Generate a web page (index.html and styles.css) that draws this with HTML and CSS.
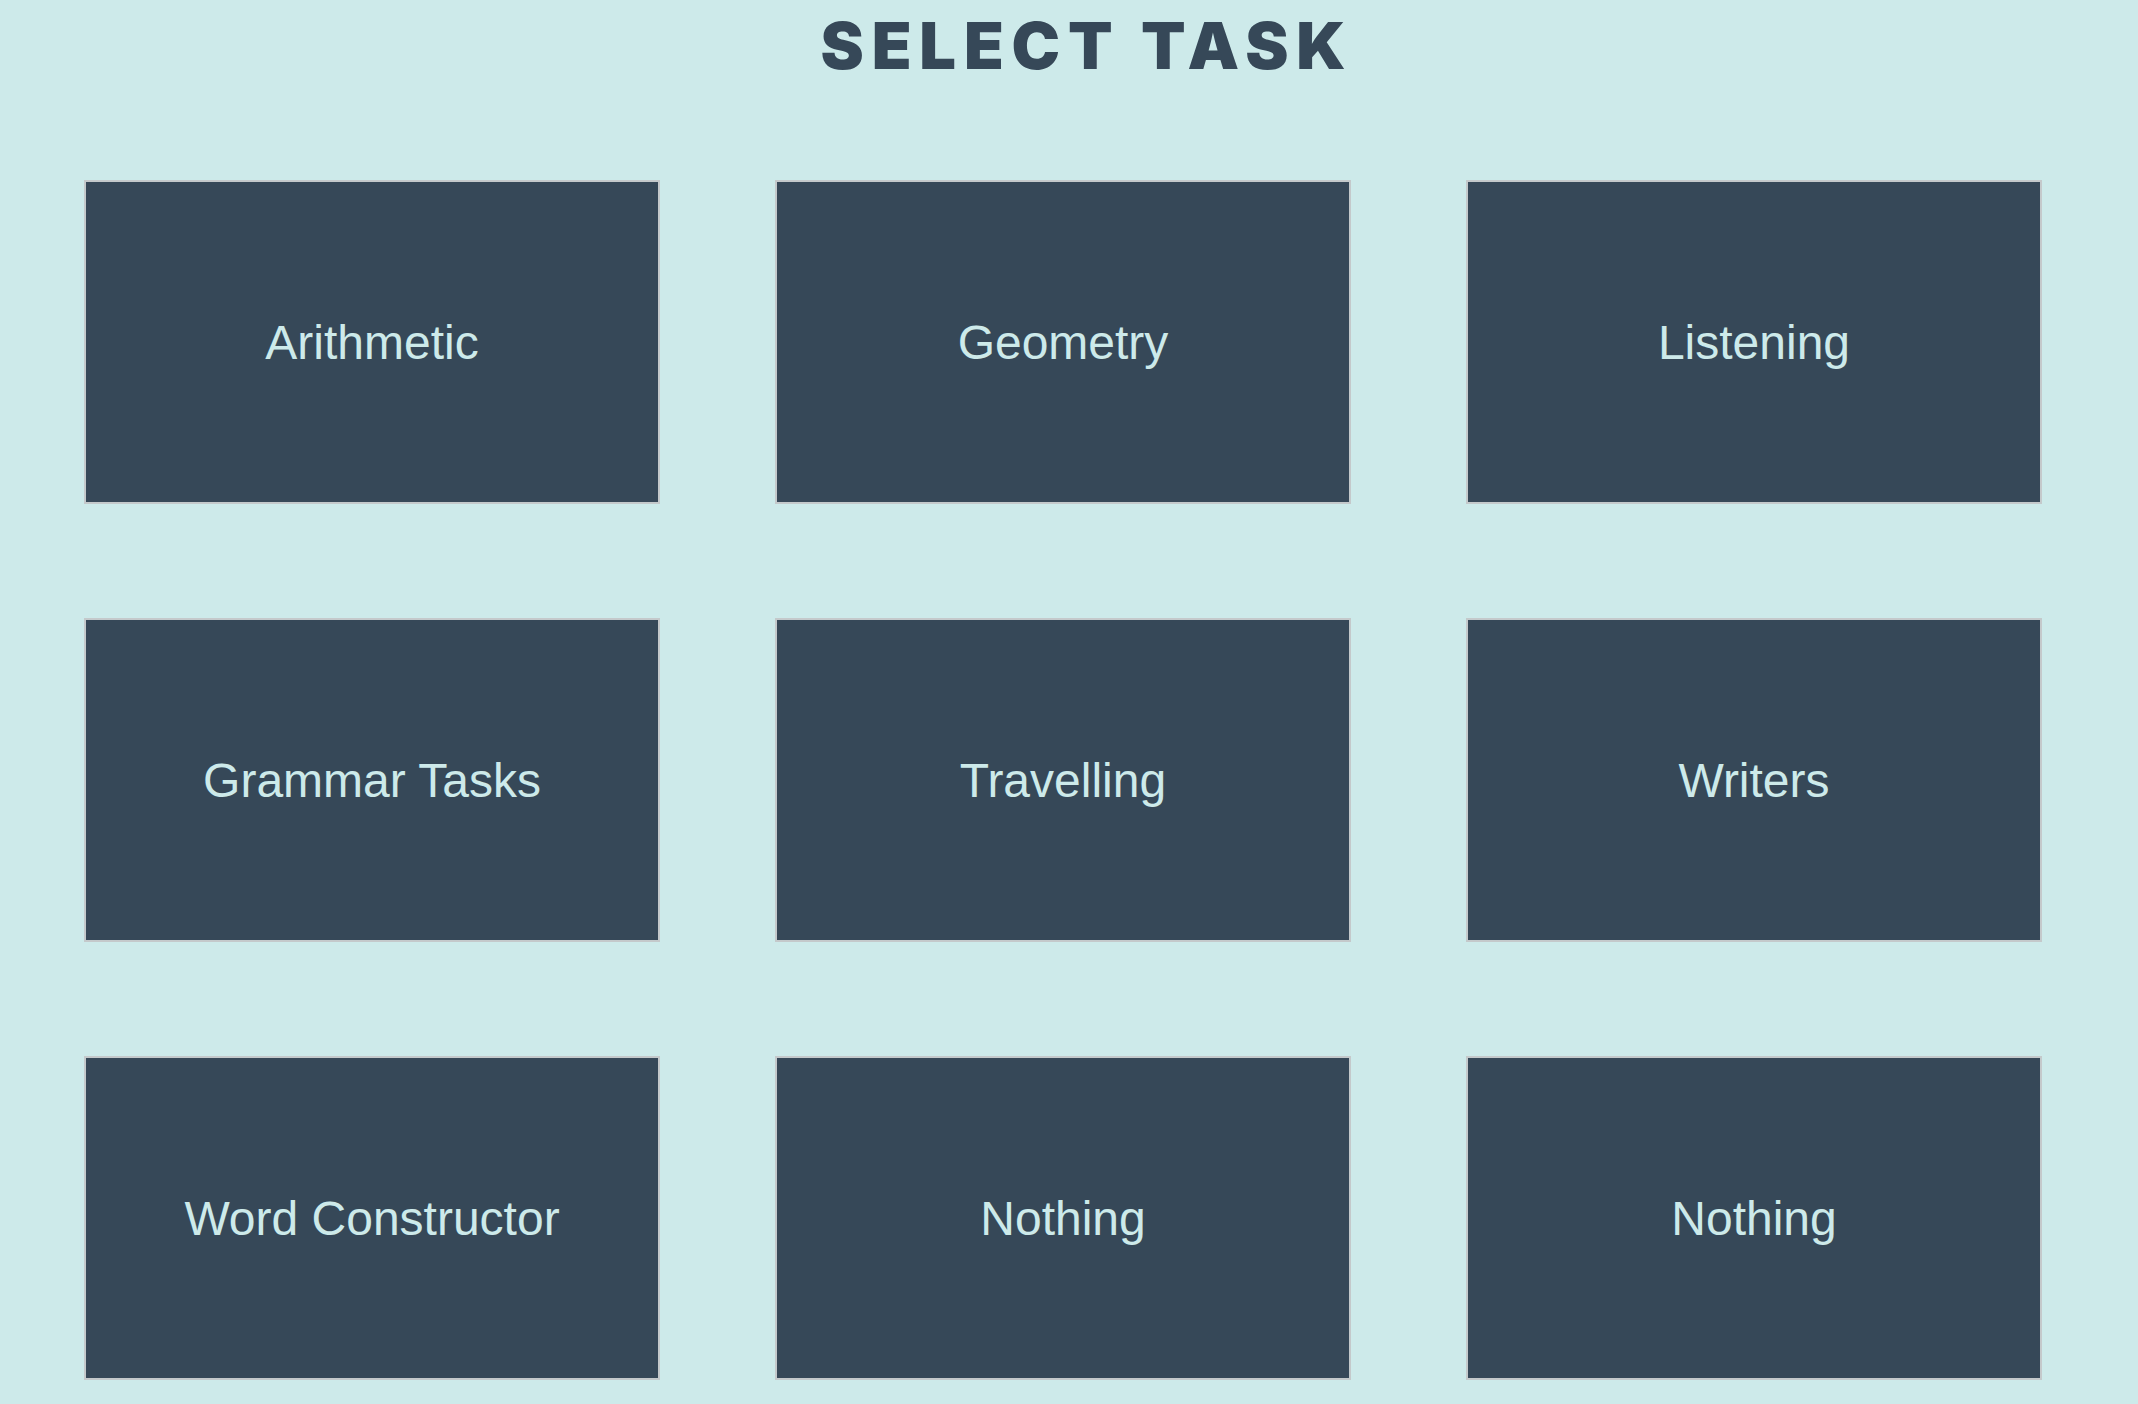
FILE: index.html
```html
<!DOCTYPE html>
<html lang="en">
<head>
<meta charset="utf-8">
<title>Select Task</title>
<link rel="stylesheet" href="styles.css">
</head>
<body>
<main class="page">
  <h1 class="title">SELECT TASK</h1>
  <div class="grid">
    <button class="card">Arithmetic</button>
    <button class="card">Geometry</button>
    <button class="card">Listening</button>
    <button class="card">Grammar Tasks</button>
    <button class="card">Travelling</button>
    <button class="card">Writers</button>
    <button class="card">Word Constructor</button>
    <button class="card">Nothing</button>
    <button class="card">Nothing</button>
  </div>
</main>
</body>
</html>
```
FILE: styles.css
```css
html, body {
  margin: 0;
  padding: 0;
  background: #cdeaea;
}
.page {
  width: 2138px;
  overflow: hidden;
}
.title {
  margin: 0;
  height: 180px;
  padding-top: 8px;
  box-sizing: border-box;
  text-align: center;
  font-family: Inter, "Noto Sans", sans-serif;
  font-weight: 900;
  font-size: 65px;
  line-height: 76px;
  letter-spacing: 0.12em;
  color: #364858;
  padding-left: 36px;
}
.grid {
  display: grid;
  grid-template-columns: repeat(3, 576px);
  grid-auto-rows: 324px;
  justify-content: space-between;
  row-gap: 114px;
  width: 1958px;
  margin-left: 84px;
}
.card {
  box-sizing: border-box;
  width: 576px;
  height: 324px;
  margin: 0;
  padding: 0;
  border: 2px solid #c4c9cb;
  background: #364858;
  color: #cdeaea;
  font-family: "Liberation Sans", Arial, sans-serif;
  font-size: 48px;
  display: flex;
  align-items: center;
  justify-content: center;
}
```
